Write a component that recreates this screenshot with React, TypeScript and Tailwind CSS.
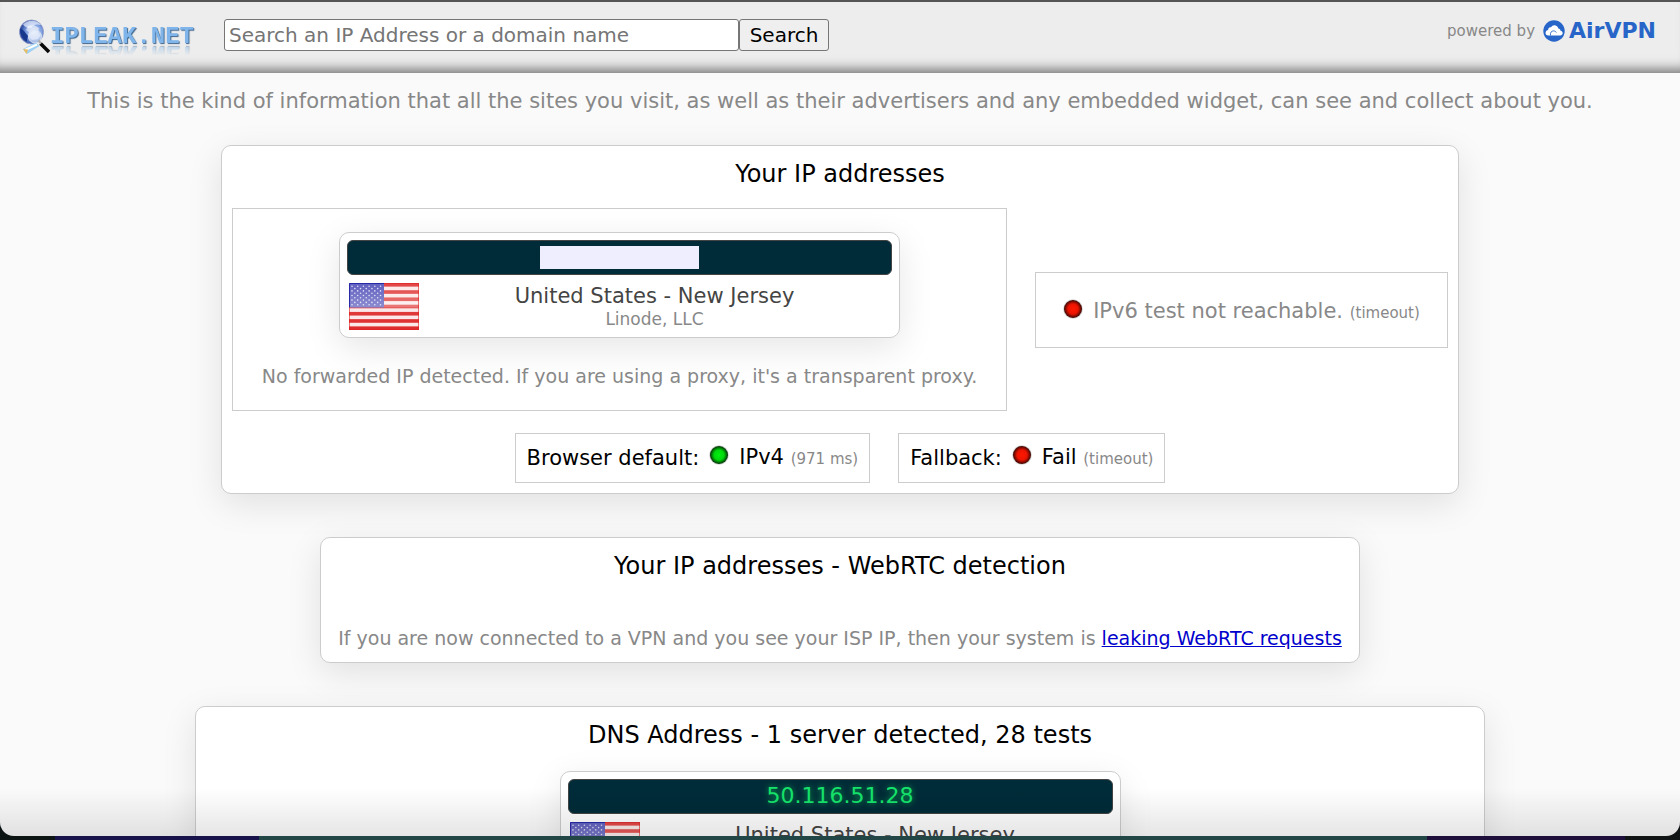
import type { ReactNode } from "react";

const STARS = Array.from({ length: 9 }, (_, row) =>
  Array.from({ length: row % 2 === 0 ? 6 : 5 }, (_, col) => ({
    x: 3 + col * 5.7 + (row % 2 === 0 ? 0 : 2.85),
    y: 2.8 + row * 2.3,
  })),
).flat();

function UsFlag() {
  return (
    <svg className="h-[47px] w-[70px] shrink-0" viewBox="0 0 70 47" role="img" aria-label="United States flag">
      <defs>
        <linearGradient id="gloss" x1="0" y1="0" x2="0" y2="1">
          <stop offset="0" stopColor="#fff" stopOpacity="0.15" />
          <stop offset="0.5" stopColor="#fff" stopOpacity="0.38" />
          <stop offset="0.55" stopColor="#fff" stopOpacity="0.12" />
          <stop offset="1" stopColor="#fff" stopOpacity="0.04" />
        </linearGradient>
      </defs>
      <rect width="70" height="47" fill="#fbe6e6" />
      {[0, 1, 2, 3, 4, 5, 6].map((i) => (
        <rect key={i} y={i * 7.23} width="70" height="3.62" fill="#dd2222" />
      ))}
      <rect width="35" height="24.5" fill="#4343b4" />
      {STARS.map((s, i) => (
        <circle key={i} cx={s.x} cy={s.y + 0.5} r="0.8" fill="#d8d8f4" />
      ))}
      <rect width="70" height="47" fill="url(#gloss)" />
      <path d="M0.5 24.5V0.5H35" fill="none" stroke="#2929a8" />
      <path d="M35 0.5H69.5V46.5H0.5V24.5" fill="none" stroke="#d22" strokeOpacity="0.6" />
    </svg>
  );
}

function GlobeIcon() {
  return (
    <svg className="h-9 w-[31px] shrink-0" viewBox="0 0 31 36" aria-hidden="true">
      <defs>
        <radialGradient id="globe" cx="0.6" cy="0.5" r="0.6">
          <stop offset="0" stopColor="#d5e2fa" />
          <stop offset="0.55" stopColor="#7f9fe0" />
          <stop offset="1" stopColor="#1b3a94" />
        </radialGradient>
      </defs>
      <circle cx="12.5" cy="13" r="12" fill="url(#globe)" stroke="#8f9dc8" strokeWidth="0.8" />
      <path d="M4 5.5C8 1 17 0 22 6c-5-1.500-8 0-9 2S6 9 4 5.500Z" fill="#eef3ff" opacity="0.7" />
      <path d="M9 7l6-1 5 3-1 4 3 3-3 4-6 1-4-4 1-4-3-2Z" fill="#fff" opacity="0.55" />
      <path d="M1.200 9c-.5 6 2 11 6.500 13.500L9 17 5 12Z" fill="#17378c" />
      <circle cx="16" cy="17.500" r="6.500" fill="#e8effc" fillOpacity="0.55" stroke="#dce4f3" strokeWidth="1" />
      <path d="M4 30l13-6.500 3.500 3.500L8 35Z" fill="#9fd0f3" />
      <path d="M6 31l12-5.500" stroke="#fff" strokeWidth="2" />
      <path d="M4 30l5 .5-1.500 4.500Z" fill="#e7bd62" />
      <path d="M21.500 24.500l8.500 8.500" stroke="#080808" strokeWidth="3.500" />
      <path d="M19.500 21.500l2.500 3" stroke="#aaa" strokeWidth="2" />
    </svg>
  );
}

function SiteLogo() {
  return (
    <a href="#" className="flex shrink-0 items-center" aria-label="IPLEAK.NET">
      <GlobeIcon />
      <span className="font-['Liberation_Mono',monospace] text-2xl leading-6 font-bold text-[#7fb5ea] [-webkit-box-reflect:below_-8px_linear-gradient(transparent_40%,rgba(0,0,0,0.5)_85%)] [text-shadow:1px_1px_1px_#3d648c]">
        IPLEAK.NET
      </span>
    </a>
  );
}

function AirVpnIcon() {
  return (
    <svg className="size-[22px]" viewBox="0 0 22 22" aria-hidden="true">
      <circle cx="11" cy="11" r="10.700" fill="#2765c8" />
      <path
        d="M5.500 15.500C3.500 15.500 2.300 14 2.600 12.400c.2-1.300 1.200-2.200 2.500-2.300C5 7.700 6.800 6.800 8 7.300 8.800 5.700 10.300 5 11.800 5.200c2 .200 3.400 1.700 3.500 3.400 1.300 0 2.200 1 2.200 2.100 1.500.2 2.300 1.300 2.200 2.600-.1 1.300-1.100 2.200-2.400 2.200Z"
        fill="#fff"
      />
      <path d="M7.500 15.500c-.5-3 1-4.600 3-4.600 1.300 0 2.300.6 2.800 1.600" fill="none" stroke="#2765c8" strokeWidth="0.900" />
    </svg>
  );
}

function Led({ on }: { on: boolean }) {
  return (
    <svg className="mb-1.5 size-5 shrink-0" viewBox="0 0 20 20" role="img" aria-label={on ? "ok" : "fail"}>
      <defs>
        <radialGradient id={on ? "led-on" : "led-off"}>
          <stop offset="0" stopColor={on ? "#00f010" : "#ff1800"} />
          <stop offset="0.55" stopColor={on ? "#00d80c" : "#ec1400"} />
          <stop offset="1" stopColor={on ? "#022c04" : "#3a0500"} />
        </radialGradient>
      </defs>
      <circle cx="10" cy="10" r="9.800" fill="#999" fillOpacity="0.45" />
      <circle cx="10" cy="10" r="9" fill={on ? "url(#led-on)" : "url(#led-off)"} />
    </svg>
  );
}

function Panel({ title, width, children }: { title: string; width: string; children: ReactNode }) {
  return (
    <section
      className={`w-full ${width} rounded-[10px] border border-[#ccc] bg-white p-2.5 text-center shadow-[0_10px_35px_rgba(0,0,0,0.1)]`}
    >
      <h2 className="text-2xl leading-9 text-black">{title}</h2>
      {children}
    </section>
  );
}

function IpCard({ ip }: { ip?: string }) {
  return (
    <div className="mx-auto w-full max-w-[561px] rounded-[10px] border border-[#ccc] bg-white p-[7px] shadow-[0_10px_35px_rgba(0,0,0,0.1)]">
      <div className="flex h-[35px] items-start justify-center rounded-md border border-[#444] bg-[#002b38] pt-[5px]">
        {ip ? (
          <span className="text-[22px] leading-[22px] text-[#15e36b] [text-shadow:0_0_6px_#0fae50]">{ip}</span>
        ) : (
          <span className="h-[23px] w-[159px] bg-[#eeeeff]" />
        )}
      </div>
      <div className="mt-2 flex px-0.5">
        <UsFlag />
        <div className="grow">
          <p className="text-[21px] leading-[26px] text-[#444]">United States - New Jersey</p>
          <p className="text-[17px] leading-5 text-[#888]">Linode, LLC</p>
        </div>
      </div>
    </div>
  );
}

export default function App() {
  return (
    <div className="flex h-screen flex-col bg-[linear-gradient(90deg,#0d1414_0_55px,#17134a_55px_259px,#214645_259px_1427px,#1d0f3a_1427px_1625px,#101414_1625px)] font-[Verdana,'DejaVu_Sans',sans-serif]">
      <div className="relative mb-1 flex min-h-0 flex-1 flex-col overflow-hidden rounded-b-[14px] bg-[#fafafa]">
        <header className="flex h-[73px] shrink-0 items-start justify-between border-t-2 border-[#555] bg-[#ededed] pt-[17px] pr-6 pl-[19px] shadow-[inset_0_-14px_12px_-10px_#777]">
          <div className="flex items-start gap-[30px]">
            <SiteLogo />
            <form className="flex" onSubmit={(e) => e.preventDefault()}>
              <input
                type="text"
                aria-label="Search an IP Address or a domain name"
                placeholder="Search an IP Address or a domain name"
                className="h-8 w-[515px] rounded-[3px] border border-[#767676] bg-white px-1 text-xl text-black placeholder:text-[#757575]"
              />
              <button type="submit" className="h-8 w-[90px] rounded-[3px] border border-[#767676] bg-[#efefef] text-xl leading-7 text-black">
                Search
              </button>
            </form>
          </div>
          <div className="flex items-center gap-2 text-[15px] leading-6 text-[#888]">
            powered by
            <a href="#" className="flex items-center gap-1 text-[22px] leading-6 font-bold text-[#2765c8]">
              <AirVpnIcon />
              AirVPN
            </a>
          </div>
        </header>

        <main className="flex flex-col items-center px-4 pt-3">
          <p className="text-center text-[21px] leading-8 text-[#888]">
            This is the kind of information that all the sites you visit, as well as their advertisers and any embedded widget, can see
            and collect about you.
          </p>

          <div className="mt-7 flex w-full flex-col items-center gap-[43px]">
            <Panel title="Your IP addresses" width="max-w-[1238px]">
              <div className="mt-4 flex items-center gap-7">
                <div className="flex-1 border border-[#ccc] px-5 pt-[23px] pb-5">
                  <IpCard />
                  <p className="mt-6 text-[19px] leading-7 text-[#888]">
                    No forwarded IP detected. If you are using a proxy, it's a transparent proxy.
                  </p>
                </div>
                <div className="flex h-[76px] w-[413px] items-center justify-center gap-2.5 border border-[#ccc] pt-1 text-[#888]">
                  <Led on={false} />
                  <p className="text-[21px] leading-7">
                    IPv6 test not reachable. <span className="text-[15px]">(timeout)</span>
                  </p>
                </div>
              </div>
              <div className="mt-[22px] flex justify-center gap-7 text-[21px] leading-7 text-black">
                <div className="flex items-center gap-2.5 border border-[#ccc] px-[11px] py-[9px]">
                  Browser default: <Led on />
                  <p>
                    IPv4 <span className="text-[15px] text-[#888]">(971 ms)</span>
                  </p>
                </div>
                <div className="flex items-center gap-2.5 border border-[#ccc] px-[11px] py-[9px]">
                  Fallback: <Led on={false} />
                  <p>
                    Fail <span className="text-[15px] text-[#888]">(timeout)</span>
                  </p>
                </div>
              </div>
            </Panel>

            <Panel title="Your IP addresses - WebRTC detection" width="max-w-[1040px]">
              <p className="mt-10 text-[19px] leading-7 text-[#888]">
                If you are now connected to a VPN and you see your ISP IP, then your system is{" "}
                <a href="#" className="text-[#0000cc] underline">
                  leaking WebRTC requests
                </a>
              </p>
            </Panel>

            <Panel title="DNS Address - 1 server detected, 28 tests" width="max-w-[1290px]">
              <div className="mt-[18px] pb-6">
                <IpCard ip="50.116.51.28" />
              </div>
            </Panel>
          </div>
        </main>
        <div className="pointer-events-none absolute inset-x-0 bottom-0 h-12 bg-linear-to-b from-transparent to-black/10" />
      </div>
    </div>
  );
}
